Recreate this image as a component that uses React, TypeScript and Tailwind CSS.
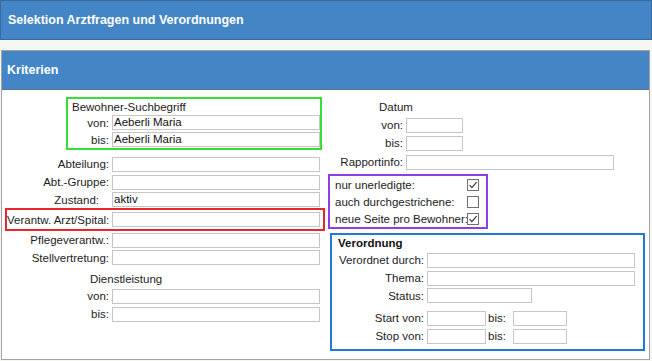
import React from "react";

// Selektion Arztfragen und Verordnungen – criteria form

function TextBox({ w, value }: { w: string; value?: string }) {
  return (
    <div
      className={`${w} h-[15px] shrink-0 border border-[#c6c6c6] bg-white pl-[1px] flex items-center leading-[13px] text-[#111]`}
    >
      {value}
    </div>
  );
}

function Row({
  label,
  lw,
  iw,
  h = "h-[18px]",
  value,
  labelClass = "",
}: {
  label: string;
  lw: string;
  iw: string;
  h?: string;
  value?: string;
  labelClass?: string;
}) {
  return (
    <div className={`${h} flex items-center gap-[3px]`}>
      <span className={`${lw} shrink-0 text-right whitespace-nowrap ${labelClass}`}>{label}</span>
      <TextBox w={iw} value={value} />
    </div>
  );
}

function Check({ checked }: { checked: boolean }) {
  return (
    <svg width="12" height="12" viewBox="0 0 12 12" className="shrink-0" aria-hidden>
      <rect x="0.5" y="0.5" width="11" height="11" fill="#fff" stroke="#6f6f6f" />
      {checked && (
        <path d="M2.5 6.2 L4.9 8.6 L9.6 3.2" fill="none" stroke="#3a3a3a" strokeWidth="1.2" />
      )}
    </svg>
  );
}

function CheckRow({ label, checked }: { label: string; checked: boolean }) {
  return (
    <div className="h-[17px] flex items-center">
      <span className="w-[132px] whitespace-nowrap">{label}</span>
      <Check checked={checked} />
    </div>
  );
}

export default function App() {
  return (
    <div className="w-[652px] h-[361px] overflow-hidden bg-[#f5f5f1] font-['Liberation_Sans',Arial,sans-serif] text-[11.5px] leading-[14px] text-[#1c1c1c]">
      <div className="h-[40px] bg-[#4485c6] border border-[#3b6a9c] flex items-center pl-[7px] text-white font-bold text-[12.5px]">
        Selektion Arztfragen und Verordnungen
      </div>

      <div className="mt-[10px] ml-[1px] w-[649px] h-[310px] border border-[#a3a3a3] bg-white flex flex-col">
        <div className="h-[39px] shrink-0 bg-[#4485c6] border-b border-[#56759a] flex items-center pl-[5px] text-white font-bold text-[12.5px]">
          Kriterien
        </div>

        <div className="flex flex-1">
          {/* left column */}
          <div className="w-[324px] shrink-0 pt-[7px] flex flex-col">
            <div className="ml-[64px] w-[256px] border-2 border-[#33e033] flex flex-col">
              <div className="h-[15px] flex items-center pl-[4px]">Bewohner-Suchbegriff</div>
              <Row label="von:" lw="w-[41px]" iw="w-[208px]" h="h-[17px]" value="Aeberli Maria" />
              <Row label="bis:" lw="w-[41px]" iw="w-[208px]" h="h-[17px]" value="Aeberli Maria" />
            </div>

            <div className="mt-[5px]">
              <Row label="Abteilung:" lw="w-[107px]" iw="w-[208px]" />
              <Row label="Abt.-Gruppe:" lw="w-[107px]" iw="w-[208px]" />
              <Row label="Zustand:" lw="w-[107px]" iw="w-[208px]" h="h-[17px]" value="aktiv" labelClass="pr-[10px]" />
            </div>

            <div className="ml-[3px] w-[320px] border-2 border-[#e8262c] pr-[3px]">
              <Row label="Verantw. Arzt/Spital:" lw="w-[102px]" iw="w-[208px]" h="h-[19px]" />
            </div>

            <Row label="Pflegeverantw.:" lw="w-[107px]" iw="w-[208px]" />
            <Row label="Stellvertretung:" lw="w-[107px]" iw="w-[208px]" h="h-[17px]" />

            <div className="h-[21px] pt-[6px] pl-[88px]">Dienstleistung</div>
            <Row label="von:" lw="w-[107px]" iw="w-[208px]" />
            <Row label="bis:" lw="w-[107px]" iw="w-[208px]" />
          </div>

          {/* right column */}
          <div className="flex-1 pt-[8px] flex flex-col">
            <div className="h-[18px] flex items-center pl-[53px]">Datum</div>
            <Row label="von:" lw="w-[77px]" iw="w-[57px]" />
            <Row label="bis:" lw="w-[77px]" iw="w-[57px]" />
            <div className="mt-[1px]">
              <Row label="Rapportinfo:" lw="w-[77px]" iw="w-[208px]" />
            </div>

            <div className="mt-[3px] ml-[2px] w-[160px] border-2 border-[#8d3fe6] pl-[5px]">
              <CheckRow label="nur unerledigte:" checked />
              <CheckRow label="auch durchgestrichene:" checked={false} />
              <CheckRow label="neue Seite pro Bewohner:" checked />
            </div>

            <div className="mt-[4px] ml-[4px] w-[315px] border-2 border-[#1f79e0] pb-[4px]">
              <div className="h-[16px] flex items-center pl-[6px] font-bold text-[#111]">Verordnung</div>
              <Row label="Verordnet durch:" lw="w-[92px]" iw="w-[208px]" />
              <Row label="Thema:" lw="w-[92px]" iw="w-[208px]" />
              <Row label="Status:" lw="w-[92px]" iw="w-[105px]" h="h-[17px]" />
              <div className="mt-[5px] h-[18px] flex items-center gap-[3px]">
                <span className="w-[92px] shrink-0 text-right">Start von:</span>
                <TextBox w="w-[59px]" />
                <span className="ml-[-1px] w-[22px] shrink-0">bis:</span>
                <TextBox w="w-[54px]" />
              </div>
              <div className="h-[18px] flex items-center gap-[3px]">
                <span className="w-[92px] shrink-0 text-right">Stop von:</span>
                <TextBox w="w-[59px]" />
                <span className="ml-[-1px] w-[22px] shrink-0">bis:</span>
                <TextBox w="w-[54px]" />
              </div>
            </div>
          </div>
        </div>
      </div>
    </div>
  );
}
